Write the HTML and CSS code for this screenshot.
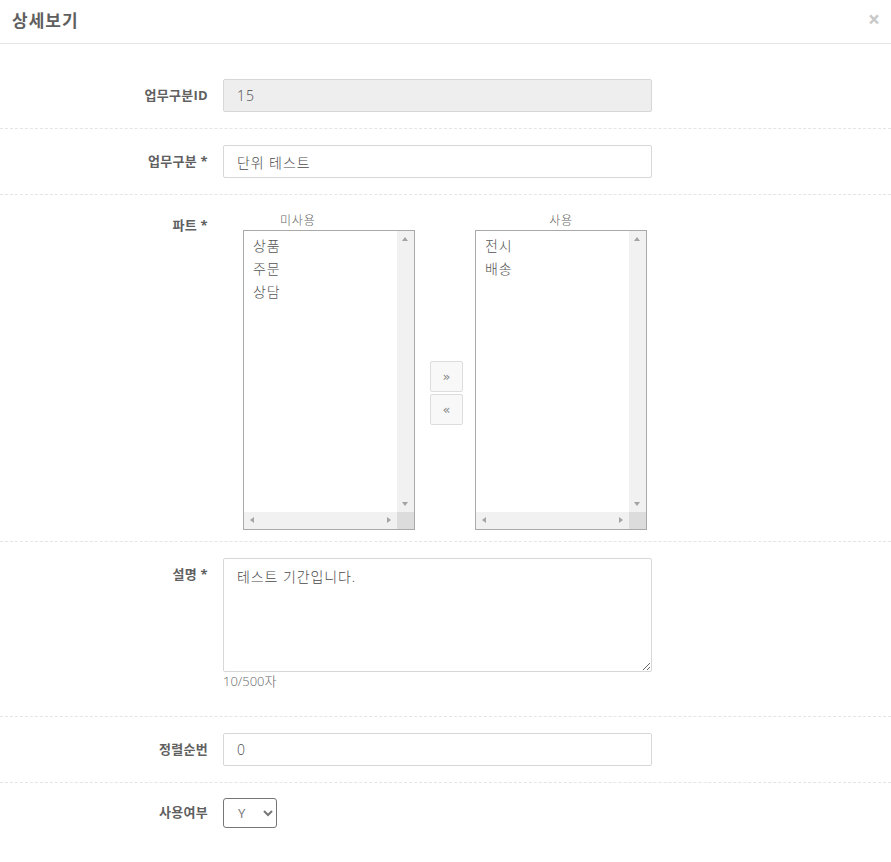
FILE: index.html
```html
<!DOCTYPE html>
<html lang="ko">
<head>
<meta charset="utf-8">
<title>상세보기</title>
<link rel="stylesheet" href="styles.css">
</head>
<body>
<div class="modal">
  <div class="modal-header">
    <h4 class="modal-title">상세보기</h4>
    <span class="close">×</span>
  </div>
  <div class="modal-body">
    <div class="form-row">
      <label class="form-label">업무구분ID</label>
      <div class="form-control"><input class="input input-disabled" type="text" value="15" disabled></div>
    </div>
    <div class="form-row">
      <label class="form-label">업무구분 *</label>
      <div class="form-control"><input class="input" type="text" value="단위 테스트"></div>
    </div>
    <div class="form-row form-row-parts">
      <label class="form-label">파트 *</label>
      <div class="form-control parts">
        <div class="part-col part-col-left">
          <div class="part-title part-title-left">미사용</div>
          <div class="listbox">
            <div class="list-items">
              <div class="list-item">상품</div>
              <div class="list-item">주문</div>
              <div class="list-item">상담</div>
            </div>
            <div class="vscroll"><span class="arr arr-up"></span><span class="arr arr-down"></span></div>
            <div class="hscroll"><span class="arr arr-left"></span><span class="arr arr-right"></span></div>
            <div class="corner"></div>
          </div>
        </div>
        <div class="move-btns">
          <button class="move-btn" type="button">»</button>
          <button class="move-btn" type="button">«</button>
        </div>
        <div class="part-col">
          <div class="part-title">사용</div>
          <div class="listbox">
            <div class="list-items">
              <div class="list-item">전시</div>
              <div class="list-item">배송</div>
            </div>
            <div class="vscroll"><span class="arr arr-up"></span><span class="arr arr-down"></span></div>
            <div class="hscroll"><span class="arr arr-left"></span><span class="arr arr-right"></span></div>
            <div class="corner"></div>
          </div>
        </div>
      </div>
    </div>
    <div class="form-row form-row-desc">
      <label class="form-label">설명 *</label>
      <div class="form-control">
        <textarea class="textarea">테스트 기간입니다.</textarea>
        <div class="counter">10/500자</div>
      </div>
    </div>
    <div class="form-row">
      <label class="form-label">정렬순번</label>
      <div class="form-control"><input class="input" type="text" value="0"></div>
    </div>
    <div class="form-row form-row-last">
      <label class="form-label">사용여부</label>
      <div class="form-control">
        <select class="select"><option>Y</option><option>N</option></select>
      </div>
    </div>
  </div>
</div>
</body>
</html>
```

FILE: styles.css
```css
* { box-sizing: border-box; }
html, body { margin: 0; padding: 0; background: #fff; }
body {
  font-family: "Open Sans", "Noto Sans CJK KR", sans-serif;
  color: #555;
  font-size: 13px;
}
.modal { width: 891px; }
.modal-header {
  height: 44px;
  border-bottom: 1px solid #e5e5e5;
  display: flex;
  align-items: center;
  justify-content: space-between;
  padding: 0 11px 0 12px;
}
.modal-title {
  margin: 0;
  font-size: 17px;
  font-weight: 700;
  color: #5f5f5f;
  line-height: 24px;
  padding-bottom: 2px;
  letter-spacing: 1px;
}
.close {
  font-size: 21px;
  font-weight: 700;
  color: #c8c8c8;
  line-height: 1;
  margin-top: -4px;
}
.modal-body { padding-top: 19px; }
.form-row {
  display: flex;
  padding: 16px 0;
  border-bottom: 1px dashed #e5e5e5;
}
.form-row-parts { padding-bottom: 11px; }
.form-row-last { border-bottom: none; padding-top: 15px; }
.form-label {
  width: 223px;
  flex: none;
  text-align: right;
  padding-right: 15px;
  font-size: 13px;
  font-weight: 700;
  color: #606060;
  line-height: 20px;
  padding-top: 6px;
  letter-spacing: 0.3px;
}
.form-row-parts .form-label { padding-top: 4px; }
.form-row-last .form-label { padding-top: 4px; }
.form-control { width: 429px; }
.input {
  display: block;
  width: 429px;
  height: 33px;
  border: 1px solid #d7d7d7;
  border-radius: 2px;
  padding: 0 13px;
  font-family: inherit;
  font-size: 14px;
  font-weight: 300;
  letter-spacing: 0.9px;
  color: #4a4a4a;
  background: #fff;
  outline: none;
}
.input-disabled { background: #eee; color: #4a4a4a; -webkit-text-fill-color: #4a4a4a; opacity: 1; }
.parts { display: flex; align-items: flex-start; }
.part-col { width: 172px; }
.part-col-left { margin-left: 20px; }
.part-title {
  text-align: center;
  font-size: 12px;
  font-weight: 300;
  letter-spacing: 0.8px;
  line-height: 19px;
  color: #666;
}
.part-title-left { text-align: left; padding-left: 37px; }
.listbox {
  width: 172px;
  height: 300px;
  border: 1px solid #a9a9a9;
  display: grid;
  grid-template-columns: 1fr 17px;
  grid-template-rows: 1fr 17px;
  background: #fff;
}
.list-items { padding: 3px 9px; }
.list-item { font-size: 14px; font-weight: 300; letter-spacing: 0.9px; line-height: 23px; color: #555; }
.vscroll, .hscroll { background: #f1f1f1; position: relative; }
.corner { background: #dcdcdc; }
.arr { position: absolute; width: 0; height: 0; }
.arr-up { left: 5px; top: 6px; border-left: 3.5px solid transparent; border-right: 3.5px solid transparent; border-bottom: 4px solid #a3a3a3; }
.arr-down { left: 5px; bottom: 6px; border-left: 3.5px solid transparent; border-right: 3.5px solid transparent; border-top: 4px solid #a3a3a3; }
.arr-left { top: 5px; left: 6px; border-top: 3.5px solid transparent; border-bottom: 3.5px solid transparent; border-right: 4px solid #a3a3a3; }
.arr-right { top: 5px; right: 6px; border-top: 3.5px solid transparent; border-bottom: 3.5px solid transparent; border-left: 4px solid #a3a3a3; }
.move-btns {
  display: flex;
  flex-direction: column;
  gap: 2px;
  margin: 150px 12px 0 15px;
}
.move-btn {
  width: 33px;
  height: 31px;
  background: #f8f8f8;
  border: 1px solid #ddd;
  border-radius: 2px;
  color: #888;
  font-size: 13px;
  line-height: 1;
  padding: 0;
  font-family: "DejaVu Sans", sans-serif;
}
.textarea {
  display: block;
  width: 429px;
  height: 114px;
  border: 1px solid #d7d7d7;
  border-radius: 2px;
  padding: 8px 13px;
  font-family: inherit;
  font-size: 14px;
  font-weight: 300;
  letter-spacing: 0.9px;
  line-height: 20px;
  color: #4a4a4a;
  outline: none;
  margin: 0;
}
.counter {
  font-size: 13px;
  font-weight: 300;
  line-height: 18px;
  color: #666;
  margin-bottom: 10px;
}
.select {
  width: 54px;
  height: 30px;
  border: 1px solid #767676;
  border-radius: 3px;
  padding: 0 0 0 10px;
  font-family: inherit;
  font-size: 13px;
  color: #777;
  background: #fff;
}
```
